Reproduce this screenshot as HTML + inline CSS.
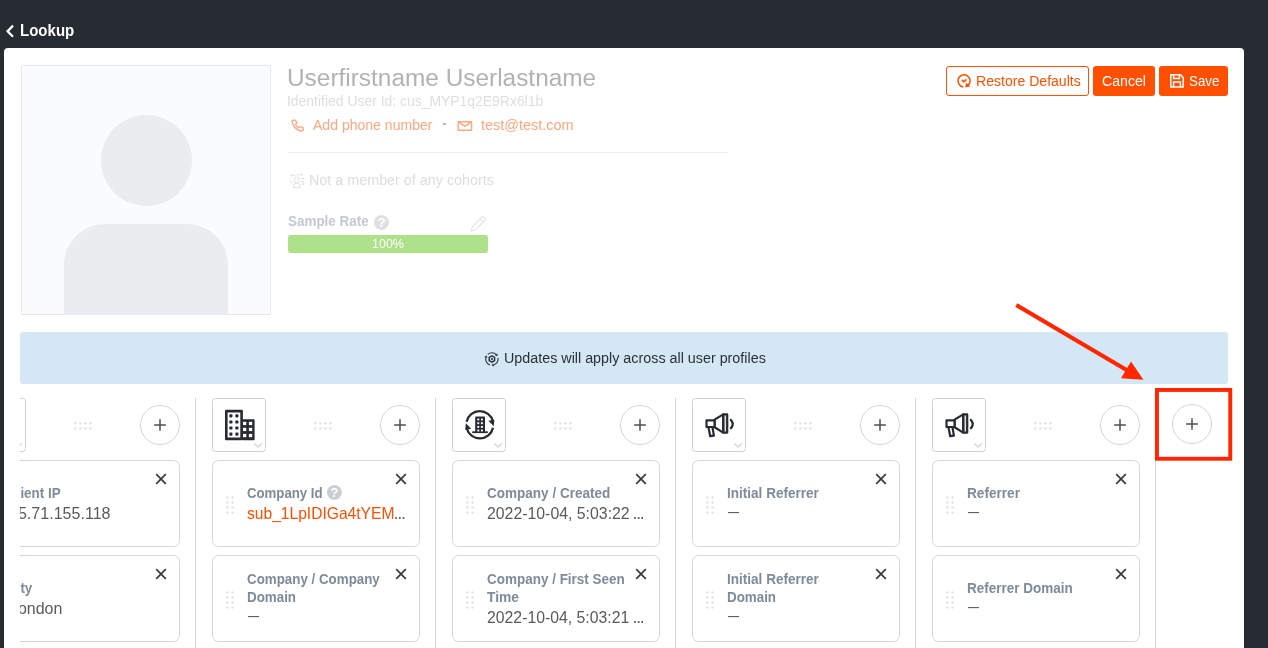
<!DOCTYPE html>
<html lang="en"><head><meta charset="utf-8"><title>Lookup</title>
<style>
html,body{margin:0;padding:0}
body{width:1268px;height:648px;overflow:hidden;background:#272c33;position:relative;font-family:"Liberation Sans",sans-serif}
.t{position:absolute;white-space:pre;line-height:1;transform-origin:0 0}
.a{position:absolute}
svg{position:absolute;overflow:visible}
.card{position:absolute;width:206px;height:84.5px;border:1px solid #cfd8dc;border-radius:6.5px;background:#fff}
.ibox{position:absolute;top:398px;width:52px;height:52px;border:1px solid #cfcfcf;border-radius:3.5px;background:#fff}
.circ{position:absolute;width:38px;height:38px;border:1px solid #cfd8de;border-radius:50%;background:#fff}
.sep{position:absolute;top:398px;width:1px;height:250px;background:#d3d4d5}
</style></head>
<body>
<div id="app" style="position:absolute;left:0;top:0;width:1268px;height:648px;overflow:hidden;will-change:transform">
<!-- header -->
<svg style="left:0;top:20px" width="20" height="24" viewBox="0 20 20 24"><path d="M13 25.6 L7.6 31.2 L13 36.8" fill="none" stroke="#fff" stroke-width="2.3" stroke-linecap="butt"/></svg>
<div class="t" style="left:20.08px;top:22.13px;font-size:16.48px;font-weight:bold;transform:scaleX(0.9124);color:#ffffff;">Lookup</div>
<!-- panel -->
<div class="a" style="left:4px;top:48px;width:1240px;height:600px;background:#fff;border-radius:4px 4px 0 0"></div>
<!-- avatar -->
<div class="a" style="left:21px;top:65px;width:248px;height:248px;border:1px solid #e6e9ec;border-radius:2px;background:#fafbfc;overflow:hidden">
  <div class="a" style="left:78.5px;top:48.7px;width:91px;height:91px;border-radius:50%;background:#eaedef"></div>
  <div class="a" style="left:42px;top:158px;width:164px;height:100px;border-radius:41px 41px 0 0;background:#eaedef"></div>
</div>
<div class="t" style="left:286.67px;top:66.00px;font-size:24.72px;font-weight:normal;transform:scaleX(0.9872);color:#b2b2b2;">Userfirstname Userlastname</div>
<div class="t" style="left:286.89px;top:94.32px;font-size:14.42px;font-weight:normal;transform:scaleX(0.9666);color:#dedede;">Identified User Id: cus_MYP1q2E9Rx6l1b</div>
<svg style="left:291.3px;top:119.4px" width="13.3" height="13.3" viewBox="0 0 24 24" fill="none" stroke="#ffa780" stroke-width="2.5" stroke-linecap="round" stroke-linejoin="round"><path d="M22 16.92v3a2 2 0 0 1-2.18 2 19.79 19.79 0 0 1-8.63-3.07 19.5 19.5 0 0 1-6-6 19.79 19.79 0 0 1-3.07-8.67A2 2 0 0 1 4.11 2h3a2 2 0 0 1 2 1.72 12.84 12.84 0 0 0 .7 2.81 2 2 0 0 1-.45 2.11L8.09 9.91a16 16 0 0 0 6 6l1.27-1.27a2 2 0 0 1 2.11-.45 12.84 12.84 0 0 0 2.81.7A2 2 0 0 1 22 16.92z"/></svg>
<div class="t" style="left:312.76px;top:118.16px;font-size:14.42px;font-weight:normal;transform:scaleX(0.9746);color:#ffa780;">Add phone number</div>
<div class="a" style="left:443.4px;top:122.5px;width:2.6px;height:2.6px;border-radius:50%;background:#a9a9a9"></div>
<svg style="left:456px;top:119px" width="18" height="14" viewBox="456 119 18 14" fill="none" stroke="#ffa780" stroke-width="1.4" stroke-linejoin="round"><rect x="458.2" y="121.7" width="13.4" height="8.6"/><path d="M458.4 121.9 L464.9 126.4 L471.4 121.9"/></svg>
<div class="t" style="left:480.78px;top:118.19px;font-size:14.42px;font-weight:normal;transform:scaleX(1.0027);color:#ffa780;">test@test.com</div>
<div class="a" style="left:288px;top:152px;width:440px;height:1px;background:#eceef0"></div>
<svg style="left:288px;top:172px" width="18" height="17" viewBox="288 172 18 17" fill="none" stroke="#e2e3e3" stroke-width="1"><circle cx="296.8" cy="180" r="2.5"/><path d="M293.4 187.6 V185.6 Q293.4 183.2 296.8 183.2 Q300.2 183.2 300.2 185.6 V187.6 Z"/><path d="M297.6 176.6 V174.6 H302.4 M301 173.4 L302.6 174.6 L301 175.8"/><path d="M295.6 176.4 L295.2 175.4 H290.8 M292 174.3 L290.6 175.4 L292 176.5"/><path d="M300.2 178.6 H304 M302.8 177.4 L304.2 178.6 L302.8 179.8"/><path d="M292.6 182.2 H289.6"/><path d="M300.6 181.6 H303.2 V184.6 M302.2 183.6 L303.2 184.9 L304.2 183.6"/></svg>
<div class="t" style="left:309.16px;top:173.25px;font-size:14.42px;font-weight:normal;transform:scaleX(0.9956);color:#dcdddd;">Not a member of any cohorts</div>
<div class="t" style="left:287.72px;top:213.71px;font-size:14.42px;font-weight:bold;transform:scaleX(0.9334);color:#c3cad2;">Sample Rate</div>
<svg style="left:372.5px;top:213.5px" width="17.0" height="17.0" viewBox="372.5 213.5 17.0 17.0"><circle cx="381" cy="222" r="7.5" fill="#e0e0e0"/><text x="381" y="226.86" text-anchor="middle" font-family="Liberation Sans, sans-serif" font-weight="bold" font-size="13.5" fill="#fff">?</text></svg>
<svg style="left:468px;top:214px" width="20" height="20" viewBox="468 214 20 20" fill="none" stroke="#e1e5e8" stroke-width="1.2" stroke-linejoin="round"><path d="M471.30 230.90 L475.40 229.91 L485.80 219.52 L482.68 216.40 L472.29 226.80 Z M483.18 222.13 L480.07 219.02"/></svg>
<div class="a" style="left:288px;top:235px;width:200px;height:17.5px;border-radius:3px;background:#afe18b"></div>
<div class="t" style="left:372.38px;top:238.14px;font-size:12.36px;font-weight:normal;transform:scaleX(1.0109);color:#ffffff;">100%</div>
<!-- buttons -->
<div class="a" style="left:946px;top:66px;width:141px;height:28px;border:1px solid #ff4f00;border-radius:3px;background:#fff"></div>
<svg style="left:955px;top:72px" width="18" height="18" viewBox="955 72 18 18" ><path d="M963.26 86.95 A6.1 6.1 0 1 1 967.76 85.71" fill="none" stroke="#ff4f00" stroke-width="1.5"/><path d="M965.4 87.6 L965.9 82.6 L970.2 86.4 Z" fill="#ff4f00"/><path d="M961.9 79.9 L963.9 81.8 L966.5 79.3" fill="none" stroke="#ff4f00" stroke-width="1.6"/></svg>
<div class="t" style="left:976.30px;top:73.64px;font-size:14.42px;font-weight:normal;transform:scaleX(0.9763);color:#ff4f00;">Restore Defaults</div>
<div class="a" style="left:1093px;top:66px;width:62px;height:30px;border-radius:3px;background:#ff4f00"></div>
<div class="t" style="left:1101.77px;top:73.64px;font-size:14.42px;font-weight:normal;transform:scaleX(0.9796);color:#ffffff;">Cancel</div>
<div class="a" style="left:1159px;top:66px;width:69px;height:30px;border-radius:3px;background:#ff4f00"></div>
<svg style="left:1168px;top:72px" width="18" height="18" viewBox="1168 72 18 18" fill="none" stroke="#fff" stroke-width="1.5" stroke-linejoin="miter"><path d="M1170.8 74.8 H1180.4 L1183.2 77.6 V87 H1170.8 Z"/><path d="M1173.6 75 V78.6 H1179.4 V75"/><path d="M1173.6 86.8 V82 H1180.4 V86.8"/></svg>
<div class="t" style="left:1188.83px;top:73.85px;font-size:14.42px;font-weight:normal;transform:scaleX(0.9250);color:#ffffff;">Save</div>
<!-- banner -->
<div class="a" style="left:20px;top:332px;width:1208px;height:51.5px;border-radius:3px;background:#d3e7f5"></div>
<svg style="left:483px;top:350px" width="18" height="18" viewBox="483 350 18 18" ><path d="M487.83 354.32 A6.2 6.2 0 0 1 496.21 354.54" fill="none" stroke="#2b3036" stroke-width="1.1"/><path d="M497.65 355.93 L497.39 353.32 L495.03 355.76 Z" fill="#2b3036"/><path d="M497.99 357.82 A6.2 6.2 0 0 1 493.61 364.96" fill="none" stroke="#2b3036" stroke-width="1.1"/><path d="M491.69 365.51 L494.08 366.59 L493.14 363.33 Z" fill="#2b3036"/><path d="M489.88 364.86 A6.2 6.2 0 0 1 485.88 357.50" fill="none" stroke="#2b3036" stroke-width="1.1"/><path d="M486.37 355.56 L484.23 357.09 L487.53 357.91 Z" fill="#2b3036"/><polygon points="491.90,355.90 494.58,357.45 494.58,360.55 491.90,362.10 489.22,360.55 489.22,357.45" fill="none" stroke="#2b3036" stroke-width="1.5" stroke-linejoin="round"/><circle cx="491.9" cy="359.0" r="1.05" fill="#2b3036"/></svg>
<div class="t" style="left:503.94px;top:351.26px;font-size:14.42px;font-weight:normal;transform:scaleX(0.9938);color:#2b3036;">Updates will apply across all user profiles</div>
<div class="sep" style="left:195px"></div>
<div class="sep" style="left:435px"></div>
<div class="sep" style="left:675px"></div>
<div class="sep" style="left:915px"></div>
<div class="sep" style="left:1155px;top:460px;height:188px"></div>
<div class="ibox" style="left:-28px"></div>
<svg style="left:13px;top:442px" width="10" height="7" viewBox="0 0 10 7"><path d="M1.2 1.4 L5 5 L8.8 1.4" fill="none" stroke="#cfd8de" stroke-width="1.4"/></svg>
<svg style="left:73px;top:421px" width="20" height="10" viewBox="73 421 20 10" fill="#dce3e7"><circle cx="75.30" cy="423.30" r="1.2"/><circle cx="75.30" cy="428.40" r="1.2"/><circle cx="80.37" cy="423.30" r="1.2"/><circle cx="80.37" cy="428.40" r="1.2"/><circle cx="85.44" cy="423.30" r="1.2"/><circle cx="85.44" cy="428.40" r="1.2"/><circle cx="90.51" cy="423.30" r="1.2"/><circle cx="90.51" cy="428.40" r="1.2"/></svg>
<div class="circ" style="left:140px;top:405px"></div>
<svg style="left:140px;top:405px" width="40" height="40" viewBox="0 0 40 40"><path d="M20 14.2 V25.8 M14.2 20 H25.8" stroke="#4d4d4d" stroke-width="1.5" fill="none"/></svg>
<div class="card" style="left:-28px;top:460px"></div>
<svg style="left:155px;top:473.3px" width="12" height="12" viewBox="0 0 12 12"><path d="M1.2 1.2 L10.8 10.8 M10.8 1.2 L1.2 10.8" stroke="#3a3a3a" stroke-width="1.7" fill="none"/></svg>
<svg style="left:-15px;top:495px" width="10" height="20" viewBox="-15 495 10 20" fill="#dce3e7"><circle cx="-12.60" cy="497.40" r="1.2"/><circle cx="-12.60" cy="502.43" r="1.2"/><circle cx="-12.60" cy="507.46" r="1.2"/><circle cx="-12.60" cy="512.49" r="1.2"/><circle cx="-7.50" cy="497.40" r="1.2"/><circle cx="-7.50" cy="502.43" r="1.2"/><circle cx="-7.50" cy="507.46" r="1.2"/><circle cx="-7.50" cy="512.49" r="1.2"/></svg>
<div class="card" style="left:-28px;top:555px"></div>
<svg style="left:155px;top:568.3px" width="12" height="12" viewBox="0 0 12 12"><path d="M1.2 1.2 L10.8 10.8 M10.8 1.2 L1.2 10.8" stroke="#3a3a3a" stroke-width="1.7" fill="none"/></svg>
<svg style="left:-15px;top:590px" width="10" height="20" viewBox="-15 590 10 20" fill="#dce3e7"><circle cx="-12.60" cy="592.40" r="1.2"/><circle cx="-12.60" cy="597.43" r="1.2"/><circle cx="-12.60" cy="602.46" r="1.2"/><circle cx="-12.60" cy="607.49" r="1.2"/><circle cx="-7.50" cy="592.40" r="1.2"/><circle cx="-7.50" cy="597.43" r="1.2"/><circle cx="-7.50" cy="602.46" r="1.2"/><circle cx="-7.50" cy="607.49" r="1.2"/></svg>
<div class="ibox" style="left:212px"></div>
<svg style="left:253px;top:442px" width="10" height="7" viewBox="0 0 10 7"><path d="M1.2 1.4 L5 5 L8.8 1.4" fill="none" stroke="#cfd8de" stroke-width="1.4"/></svg>
<svg style="left:222px;top:406px" width="36" height="38" viewBox="222 406 36 38" ><rect x="226.3" y="411.1" width="15.3" height="27.8" fill="#fff" stroke="#262b31" stroke-width="2.6" stroke-linejoin="round"/><rect x="229.35" y="414.35" width="3.1" height="3.1" rx="0.9" fill="#262b31"/><rect x="229.35" y="420.45" width="3.1" height="3.1" rx="0.9" fill="#262b31"/><rect x="229.35" y="426.45" width="3.1" height="3.1" rx="0.9" fill="#262b31"/><rect x="229.35" y="432.55" width="3.1" height="3.1" rx="0.9" fill="#262b31"/><rect x="235.35" y="414.35" width="3.1" height="3.1" rx="0.9" fill="#262b31"/><rect x="235.35" y="420.45" width="3.1" height="3.1" rx="0.9" fill="#262b31"/><rect x="235.35" y="426.45" width="3.1" height="3.1" rx="0.9" fill="#262b31"/><rect x="235.35" y="432.55" width="3.1" height="3.1" rx="0.9" fill="#262b31"/><rect x="242.2" y="419.2" width="12.4" height="21" rx="0.8" fill="#262b31"/><rect x="243.0" y="421.8" width="3.3" height="3.3" fill="#fff"/><rect x="243.0" y="427.8" width="3.3" height="3.3" fill="#fff"/><rect x="243.0" y="433.9" width="3.3" height="3.3" fill="#fff"/><rect x="248.9" y="421.8" width="3.3" height="3.3" fill="#fff"/><rect x="248.9" y="427.8" width="3.3" height="3.3" fill="#fff"/><rect x="248.9" y="433.9" width="3.3" height="3.3" fill="#fff"/></svg>
<svg style="left:313px;top:421px" width="20" height="10" viewBox="313 421 20 10" fill="#dce3e7"><circle cx="315.30" cy="423.30" r="1.2"/><circle cx="315.30" cy="428.40" r="1.2"/><circle cx="320.37" cy="423.30" r="1.2"/><circle cx="320.37" cy="428.40" r="1.2"/><circle cx="325.44" cy="423.30" r="1.2"/><circle cx="325.44" cy="428.40" r="1.2"/><circle cx="330.51" cy="423.30" r="1.2"/><circle cx="330.51" cy="428.40" r="1.2"/></svg>
<div class="circ" style="left:380px;top:405px"></div>
<svg style="left:380px;top:405px" width="40" height="40" viewBox="0 0 40 40"><path d="M20 14.2 V25.8 M14.2 20 H25.8" stroke="#4d4d4d" stroke-width="1.5" fill="none"/></svg>
<div class="card" style="left:212px;top:460px"></div>
<svg style="left:395px;top:473.3px" width="12" height="12" viewBox="0 0 12 12"><path d="M1.2 1.2 L10.8 10.8 M10.8 1.2 L1.2 10.8" stroke="#3a3a3a" stroke-width="1.7" fill="none"/></svg>
<svg style="left:225px;top:495px" width="10" height="20" viewBox="225 495 10 20" fill="#dce3e7"><circle cx="227.40" cy="497.40" r="1.2"/><circle cx="227.40" cy="502.43" r="1.2"/><circle cx="227.40" cy="507.46" r="1.2"/><circle cx="227.40" cy="512.49" r="1.2"/><circle cx="232.50" cy="497.40" r="1.2"/><circle cx="232.50" cy="502.43" r="1.2"/><circle cx="232.50" cy="507.46" r="1.2"/><circle cx="232.50" cy="512.49" r="1.2"/></svg>
<div class="card" style="left:212px;top:555px"></div>
<svg style="left:395px;top:568.3px" width="12" height="12" viewBox="0 0 12 12"><path d="M1.2 1.2 L10.8 10.8 M10.8 1.2 L1.2 10.8" stroke="#3a3a3a" stroke-width="1.7" fill="none"/></svg>
<svg style="left:225px;top:590px" width="10" height="20" viewBox="225 590 10 20" fill="#dce3e7"><circle cx="227.40" cy="592.40" r="1.2"/><circle cx="227.40" cy="597.43" r="1.2"/><circle cx="227.40" cy="602.46" r="1.2"/><circle cx="227.40" cy="607.49" r="1.2"/><circle cx="232.50" cy="592.40" r="1.2"/><circle cx="232.50" cy="597.43" r="1.2"/><circle cx="232.50" cy="602.46" r="1.2"/><circle cx="232.50" cy="607.49" r="1.2"/></svg>
<div class="ibox" style="left:452px"></div>
<svg style="left:493px;top:442px" width="10" height="7" viewBox="0 0 10 7"><path d="M1.2 1.4 L5 5 L8.8 1.4" fill="none" stroke="#cfd8de" stroke-width="1.4"/></svg>
<svg style="left:462px;top:406px" width="36" height="38" viewBox="462 406 36 38" ><path d="M466.55 421.74 A13.6 13.6 0 0 1 492.94 421.28" fill="none" stroke="#262b31" stroke-width="2.3"/><path d="M493.72 426.26 L488.41 420.79 L494.36 419.79 Z" fill="#262b31"/><path d="M493.05 427.86 A13.6 13.6 0 0 1 466.66 428.32" fill="none" stroke="#262b31" stroke-width="2.3"/><path d="M465.88 423.34 L471.19 428.81 L465.24 429.81 Z" fill="#262b31"/><rect x="475.2" y="416.4" width="9.8" height="15.6" rx="0.6" fill="#262b31"/><rect x="472.2" y="431.3" width="15.6" height="1.8" fill="#262b31"/><rect x="477.35" y="418.55" width="1.9" height="1.9" fill="#fff"/><rect x="477.35" y="422.25" width="1.9" height="1.9" fill="#fff"/><rect x="477.35" y="425.95" width="1.9" height="1.9" fill="#fff"/><rect x="477.35" y="429.55" width="1.9" height="1.9" fill="#fff"/><rect x="480.95" y="418.55" width="1.9" height="1.9" fill="#fff"/><rect x="480.95" y="422.25" width="1.9" height="1.9" fill="#fff"/><rect x="480.95" y="425.95" width="1.9" height="1.9" fill="#fff"/><rect x="480.95" y="429.55" width="1.9" height="1.9" fill="#fff"/></svg>
<svg style="left:553px;top:421px" width="20" height="10" viewBox="553 421 20 10" fill="#dce3e7"><circle cx="555.30" cy="423.30" r="1.2"/><circle cx="555.30" cy="428.40" r="1.2"/><circle cx="560.37" cy="423.30" r="1.2"/><circle cx="560.37" cy="428.40" r="1.2"/><circle cx="565.44" cy="423.30" r="1.2"/><circle cx="565.44" cy="428.40" r="1.2"/><circle cx="570.51" cy="423.30" r="1.2"/><circle cx="570.51" cy="428.40" r="1.2"/></svg>
<div class="circ" style="left:620px;top:405px"></div>
<svg style="left:620px;top:405px" width="40" height="40" viewBox="0 0 40 40"><path d="M20 14.2 V25.8 M14.2 20 H25.8" stroke="#4d4d4d" stroke-width="1.5" fill="none"/></svg>
<div class="card" style="left:452px;top:460px"></div>
<svg style="left:635px;top:473.3px" width="12" height="12" viewBox="0 0 12 12"><path d="M1.2 1.2 L10.8 10.8 M10.8 1.2 L1.2 10.8" stroke="#3a3a3a" stroke-width="1.7" fill="none"/></svg>
<svg style="left:465px;top:495px" width="10" height="20" viewBox="465 495 10 20" fill="#dce3e7"><circle cx="467.40" cy="497.40" r="1.2"/><circle cx="467.40" cy="502.43" r="1.2"/><circle cx="467.40" cy="507.46" r="1.2"/><circle cx="467.40" cy="512.49" r="1.2"/><circle cx="472.50" cy="497.40" r="1.2"/><circle cx="472.50" cy="502.43" r="1.2"/><circle cx="472.50" cy="507.46" r="1.2"/><circle cx="472.50" cy="512.49" r="1.2"/></svg>
<div class="card" style="left:452px;top:555px"></div>
<svg style="left:635px;top:568.3px" width="12" height="12" viewBox="0 0 12 12"><path d="M1.2 1.2 L10.8 10.8 M10.8 1.2 L1.2 10.8" stroke="#3a3a3a" stroke-width="1.7" fill="none"/></svg>
<svg style="left:465px;top:590px" width="10" height="20" viewBox="465 590 10 20" fill="#dce3e7"><circle cx="467.40" cy="592.40" r="1.2"/><circle cx="467.40" cy="597.43" r="1.2"/><circle cx="467.40" cy="602.46" r="1.2"/><circle cx="467.40" cy="607.49" r="1.2"/><circle cx="472.50" cy="592.40" r="1.2"/><circle cx="472.50" cy="597.43" r="1.2"/><circle cx="472.50" cy="602.46" r="1.2"/><circle cx="472.50" cy="607.49" r="1.2"/></svg>
<div class="ibox" style="left:692px"></div>
<svg style="left:733px;top:442px" width="10" height="7" viewBox="0 0 10 7"><path d="M1.2 1.4 L5 5 L8.8 1.4" fill="none" stroke="#cfd8de" stroke-width="1.4"/></svg>
<svg style="left:702px;top:406px" width="36" height="38" viewBox="702 406 36 38" ><path d="M708.4 427 L712.4 427 L713.9 435.6 L710.2 436.2 Z" fill="#fff" stroke="#262b31" stroke-width="2.2" stroke-linejoin="round"/><path d="M714.6 419.6 L723.2 414.4 V432.6 L714.6 427.2 Z" fill="#fff" stroke="#262b31" stroke-width="2.2" stroke-linejoin="round"/><rect x="706.5" y="420.4" width="8.1" height="6.6" fill="#fff" stroke="#262b31" stroke-width="2.2" stroke-linejoin="round"/><rect x="723.4" y="414.4" width="3.8" height="18.2" fill="#dcdcdc" stroke="#262b31" stroke-width="2.2" stroke-linejoin="round"/><path d="M730.9 419.9 Q734.6 424 730.9 428.2" fill="none" stroke="#262b31" stroke-width="2.2" stroke-linecap="round"/></svg>
<svg style="left:793px;top:421px" width="20" height="10" viewBox="793 421 20 10" fill="#dce3e7"><circle cx="795.30" cy="423.30" r="1.2"/><circle cx="795.30" cy="428.40" r="1.2"/><circle cx="800.37" cy="423.30" r="1.2"/><circle cx="800.37" cy="428.40" r="1.2"/><circle cx="805.44" cy="423.30" r="1.2"/><circle cx="805.44" cy="428.40" r="1.2"/><circle cx="810.51" cy="423.30" r="1.2"/><circle cx="810.51" cy="428.40" r="1.2"/></svg>
<div class="circ" style="left:860px;top:405px"></div>
<svg style="left:860px;top:405px" width="40" height="40" viewBox="0 0 40 40"><path d="M20 14.2 V25.8 M14.2 20 H25.8" stroke="#4d4d4d" stroke-width="1.5" fill="none"/></svg>
<div class="card" style="left:692px;top:460px"></div>
<svg style="left:875px;top:473.3px" width="12" height="12" viewBox="0 0 12 12"><path d="M1.2 1.2 L10.8 10.8 M10.8 1.2 L1.2 10.8" stroke="#3a3a3a" stroke-width="1.7" fill="none"/></svg>
<svg style="left:705px;top:495px" width="10" height="20" viewBox="705 495 10 20" fill="#dce3e7"><circle cx="707.40" cy="497.40" r="1.2"/><circle cx="707.40" cy="502.43" r="1.2"/><circle cx="707.40" cy="507.46" r="1.2"/><circle cx="707.40" cy="512.49" r="1.2"/><circle cx="712.50" cy="497.40" r="1.2"/><circle cx="712.50" cy="502.43" r="1.2"/><circle cx="712.50" cy="507.46" r="1.2"/><circle cx="712.50" cy="512.49" r="1.2"/></svg>
<div class="card" style="left:692px;top:555px"></div>
<svg style="left:875px;top:568.3px" width="12" height="12" viewBox="0 0 12 12"><path d="M1.2 1.2 L10.8 10.8 M10.8 1.2 L1.2 10.8" stroke="#3a3a3a" stroke-width="1.7" fill="none"/></svg>
<svg style="left:705px;top:590px" width="10" height="20" viewBox="705 590 10 20" fill="#dce3e7"><circle cx="707.40" cy="592.40" r="1.2"/><circle cx="707.40" cy="597.43" r="1.2"/><circle cx="707.40" cy="602.46" r="1.2"/><circle cx="707.40" cy="607.49" r="1.2"/><circle cx="712.50" cy="592.40" r="1.2"/><circle cx="712.50" cy="597.43" r="1.2"/><circle cx="712.50" cy="602.46" r="1.2"/><circle cx="712.50" cy="607.49" r="1.2"/></svg>
<div class="ibox" style="left:932px"></div>
<svg style="left:973px;top:442px" width="10" height="7" viewBox="0 0 10 7"><path d="M1.2 1.4 L5 5 L8.8 1.4" fill="none" stroke="#cfd8de" stroke-width="1.4"/></svg>
<svg style="left:942px;top:406px" width="36" height="38" viewBox="942 406 36 38" ><path d="M948.4 427 L952.4 427 L953.9 435.6 L950.2 436.2 Z" fill="#fff" stroke="#262b31" stroke-width="2.2" stroke-linejoin="round"/><path d="M954.6 419.6 L963.2 414.4 V432.6 L954.6 427.2 Z" fill="#fff" stroke="#262b31" stroke-width="2.2" stroke-linejoin="round"/><rect x="946.5" y="420.4" width="8.1" height="6.6" fill="#fff" stroke="#262b31" stroke-width="2.2" stroke-linejoin="round"/><rect x="963.4" y="414.4" width="3.8" height="18.2" fill="#dcdcdc" stroke="#262b31" stroke-width="2.2" stroke-linejoin="round"/><path d="M970.9 419.9 Q974.6 424 970.9 428.2" fill="none" stroke="#262b31" stroke-width="2.2" stroke-linecap="round"/></svg>
<svg style="left:1033px;top:421px" width="20" height="10" viewBox="1033 421 20 10" fill="#dce3e7"><circle cx="1035.30" cy="423.30" r="1.2"/><circle cx="1035.30" cy="428.40" r="1.2"/><circle cx="1040.37" cy="423.30" r="1.2"/><circle cx="1040.37" cy="428.40" r="1.2"/><circle cx="1045.44" cy="423.30" r="1.2"/><circle cx="1045.44" cy="428.40" r="1.2"/><circle cx="1050.51" cy="423.30" r="1.2"/><circle cx="1050.51" cy="428.40" r="1.2"/></svg>
<div class="circ" style="left:1100px;top:405px"></div>
<svg style="left:1100px;top:405px" width="40" height="40" viewBox="0 0 40 40"><path d="M20 14.2 V25.8 M14.2 20 H25.8" stroke="#4d4d4d" stroke-width="1.5" fill="none"/></svg>
<div class="card" style="left:932px;top:460px"></div>
<svg style="left:1115px;top:473.3px" width="12" height="12" viewBox="0 0 12 12"><path d="M1.2 1.2 L10.8 10.8 M10.8 1.2 L1.2 10.8" stroke="#3a3a3a" stroke-width="1.7" fill="none"/></svg>
<svg style="left:945px;top:495px" width="10" height="20" viewBox="945 495 10 20" fill="#dce3e7"><circle cx="947.40" cy="497.40" r="1.2"/><circle cx="947.40" cy="502.43" r="1.2"/><circle cx="947.40" cy="507.46" r="1.2"/><circle cx="947.40" cy="512.49" r="1.2"/><circle cx="952.50" cy="497.40" r="1.2"/><circle cx="952.50" cy="502.43" r="1.2"/><circle cx="952.50" cy="507.46" r="1.2"/><circle cx="952.50" cy="512.49" r="1.2"/></svg>
<div class="card" style="left:932px;top:555px"></div>
<svg style="left:1115px;top:568.3px" width="12" height="12" viewBox="0 0 12 12"><path d="M1.2 1.2 L10.8 10.8 M10.8 1.2 L1.2 10.8" stroke="#3a3a3a" stroke-width="1.7" fill="none"/></svg>
<svg style="left:945px;top:590px" width="10" height="20" viewBox="945 590 10 20" fill="#dce3e7"><circle cx="947.40" cy="592.40" r="1.2"/><circle cx="947.40" cy="597.43" r="1.2"/><circle cx="947.40" cy="602.46" r="1.2"/><circle cx="947.40" cy="607.49" r="1.2"/><circle cx="952.50" cy="592.40" r="1.2"/><circle cx="952.50" cy="597.43" r="1.2"/><circle cx="952.50" cy="602.46" r="1.2"/><circle cx="952.50" cy="607.49" r="1.2"/></svg>
<div class="t" style="left:6.88px;top:486.21px;font-size:14.42px;font-weight:bold;transform:scaleX(0.9300);color:#7d8b9b;">Client IP</div>
<div class="t" style="left:9.13px;top:504.94px;font-size:16.48px;font-weight:normal;transform:scaleX(0.9750);color:#5a5a5a;">85.71.155.118</div>
<div class="t" style="left:7.49px;top:581.21px;font-size:14.42px;font-weight:bold;transform:scaleX(0.9300);color:#7d8b9b;">City</div>
<div class="t" style="left:8.73px;top:599.83px;font-size:16.48px;font-weight:normal;transform:scaleX(0.9700);color:#5a5a5a;">London</div>
<div class="t" style="left:247.43px;top:486.17px;font-size:14.42px;font-weight:bold;transform:scaleX(0.9167);color:#7d8b9b;">Company Id</div>
<div class="t" style="left:247.46px;top:505.00px;font-size:16.48px;font-weight:normal;transform:scaleX(0.9472);color:#ff4f00;">sub_1LpIDIGa4tYEM</div>
<div class="t" style="left:393.77px;top:509.88px;font-size:11.85px;font-weight:bold;transform:scaleX(0.9838);color:#666666;">…</div>
<div class="t" style="left:247.22px;top:572.39px;font-size:14.42px;font-weight:bold;transform:scaleX(0.9268);color:#7d8b9b;">Company / Company</div>
<div class="t" style="left:246.51px;top:589.91px;font-size:14.42px;font-weight:bold;transform:scaleX(0.9278);color:#7d8b9b;">Domain</div>
<div class="t" style="left:487.21px;top:486.28px;font-size:14.42px;font-weight:bold;transform:scaleX(0.9389);color:#7d8b9b;">Company / Created</div>
<div class="t" style="left:487.14px;top:504.93px;font-size:16.48px;font-weight:normal;transform:scaleX(0.9616);color:#5a5a5a;">2022-10-04, 5:03:22</div>
<div class="t" style="left:633.43px;top:509.89px;font-size:11.85px;font-weight:bold;transform:scaleX(0.9514);color:#5a5a5a;">…</div>
<div class="t" style="left:487.22px;top:572.46px;font-size:14.42px;font-weight:bold;transform:scaleX(0.9354);color:#7d8b9b;">Company / First Seen</div>
<div class="t" style="left:487.18px;top:589.93px;font-size:14.42px;font-weight:bold;transform:scaleX(0.9587);color:#7d8b9b;">Time</div>
<div class="t" style="left:487.14px;top:608.86px;font-size:16.48px;font-weight:normal;transform:scaleX(0.9590);color:#5a5a5a;">2022-10-04, 5:03:21</div>
<div class="t" style="left:633.43px;top:613.79px;font-size:11.85px;font-weight:bold;transform:scaleX(0.9514);color:#5a5a5a;">…</div>
<div class="t" style="left:727.16px;top:486.28px;font-size:14.42px;font-weight:bold;transform:scaleX(0.9401);color:#7d8b9b;">Initial Referrer</div>
<div class="t" style="left:727.16px;top:572.48px;font-size:14.42px;font-weight:bold;transform:scaleX(0.9401);color:#7d8b9b;">Initial Referrer</div>
<div class="t" style="left:726.51px;top:589.91px;font-size:14.42px;font-weight:bold;transform:scaleX(0.9278);color:#7d8b9b;">Domain</div>
<div class="t" style="left:967.45px;top:486.28px;font-size:14.42px;font-weight:bold;transform:scaleX(0.9450);color:#7d8b9b;">Referrer</div>
<div class="t" style="left:966.57px;top:581.27px;font-size:14.42px;font-weight:bold;transform:scaleX(0.9364);color:#7d8b9b;">Referrer Domain</div>
<svg style="left:325.65000000000003px;top:483.5px" width="16.8" height="16.8" viewBox="325.65000000000003 483.5 16.8 16.8"><circle cx="334.05" cy="491.9" r="7.4" fill="#c9ced3"/><text x="334.05" y="496.76" text-anchor="middle" font-family="Liberation Sans, sans-serif" font-weight="bold" font-size="13.5" fill="#fff">?</text></svg>
<div class="t" style="left:247.8px;top:608.30px;font-size:16px;color:#606060;transform:scaleX(.69);transform-origin:0 0">—</div>
<div class="t" style="left:727.9px;top:504.40px;font-size:16px;color:#606060;transform:scaleX(.69);transform-origin:0 0">—</div>
<div class="t" style="left:727.9px;top:608.30px;font-size:16px;color:#606060;transform:scaleX(.69);transform-origin:0 0">—</div>
<div class="t" style="left:967.9px;top:504.40px;font-size:16px;color:#606060;transform:scaleX(.69);transform-origin:0 0">—</div>
<div class="t" style="left:967.9px;top:599.40px;font-size:16px;color:#606060;transform:scaleX(.69);transform-origin:0 0">—</div>
<!-- cover -->
<div class="a" style="left:4px;top:390px;width:16px;height:258px;background:#fff"></div>
<div class="a" style="left:0;top:390px;width:4px;height:258px;background:#272c33"></div>
<svg style="left:1000px;top:290px" width="250" height="180" viewBox="1000 290 250 180" ><path d="M1016.3 305 L1130 372" stroke="#ff2600" stroke-width="4.2" fill="none"/><path d="M1143.4 379.8 L1131 361.6 L1121 378.3 Z" fill="#ff2600"/><rect x="1156.95" y="389.95" width="73.3" height="68.8" fill="none" stroke="#ff2600" stroke-width="3.9"/></svg><div class="circ" style="left:1172px;top:404px"></div><svg style="left:1172px;top:404px" width="40" height="40" viewBox="0 0 40 40"><path d="M20 14.2 V25.8 M14.2 20 H25.8" stroke="#4d4d4d" stroke-width="1.5" fill="none"/></svg>
</div>
</body></html>
